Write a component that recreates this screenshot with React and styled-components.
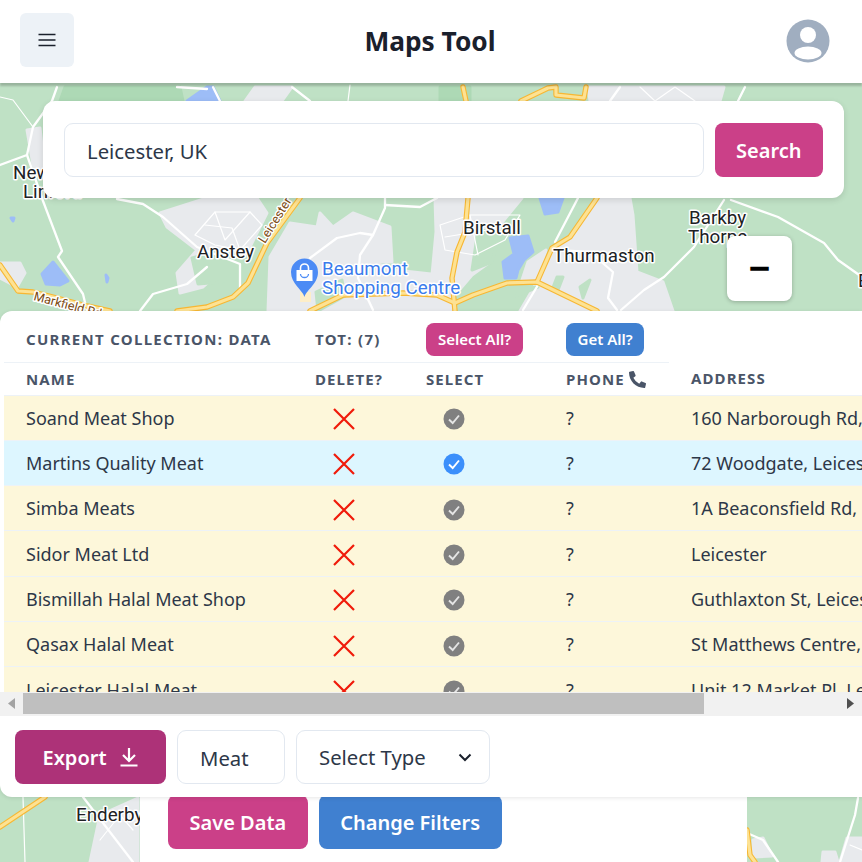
import React from 'react';
import styled, { createGlobalStyle } from 'styled-components';
import { FaPhoneAlt } from 'react-icons/fa';

const GlobalStyle = createGlobalStyle`
  html, body {
    margin: 0;
    padding: 0;
    height: 100%;
    overflow: hidden;
    background: #fff;
  }
  * {
    box-sizing: border-box;
  }
  body, input, button {
    font-family: "Noto Sans", "Open Sans", sans-serif;
  }
`;

const Page = styled.div`
  display: flex;
  flex-direction: column;
  height: 100vh;
  overflow: hidden;
`;

const Header = styled.header`
  position: relative;
  z-index: 5;
  flex: none;
  height: 83px;
  padding: 13px 32px 0 20px;
  display: flex;
  align-items: flex-start;
  justify-content: space-between;
  background: #fff;
  box-shadow: 0 3px 2px rgba(0, 0, 0, 0.2);
`;

const MenuButton = styled.button`
  width: 54px;
  height: 54px;
  padding: 0;
  display: flex;
  align-items: center;
  justify-content: center;
  background: #edf2f7;
  border: 0;
  border-radius: 6px;
`;

const Title = styled.h1`
  margin: 10px 0 0;
  font-size: 26.3px;
  line-height: 36px;
  font-weight: 700;
  color: #1a202c;
`;

const Avatar = styled.svg`
  width: 44px;
  height: 44px;
  margin-top: 6px;
`;

const MapArea = styled.main`
  position: relative;
  flex: 1;
  min-height: 0;
`;

const MapCanvas = styled.svg`
  position: absolute;
  inset: 0;
  width: 100%;
  height: 100%;
`;

const SearchCard = styled.form`
  position: absolute;
  top: 18px;
  left: 43px;
  width: 801px;
  height: 97px;
  padding: 22px 21px;
  display: flex;
  gap: 11px;
  background: #fff;
  border-radius: 12px;
  box-shadow: 0 2px 6px rgba(0, 0, 0, 0.12);
`;

const TextInput = styled.input`
  flex: ${props => (props.$grow ? 1 : 'none')};
  width: ${props => (props.$grow ? 'auto' : '108px')};
  min-width: 0;
  height: 54px;
  padding: 1px 22px 0;
  font-size: 20.3px;
  color: #2d3748;
  background: #fff;
  border: 1px solid #e2e8f0;
  border-radius: 9px;
  outline: none;
`;

const ActionButton = styled.button`
  flex: none;
  height: ${props => props.$height || 54}px;
  padding: 0 ${props => props.$pad || 21.5}px;
  display: flex;
  align-items: center;
  justify-content: center;
  gap: 12px;
  font-size: ${props => props.$size || 20}px;
  font-weight: 600;
  color: #fff;
  background: ${props => props.$color};
  border: 0;
  border-radius: ${props => props.$radius || 8}px;
`;

const ZoomButton = styled.button`
  position: absolute;
  top: 153px;
  left: 727px;
  width: 65px;
  height: 65px;
  padding: 0 0 3px;
  font-size: 38px;
  line-height: 1;
  font-weight: 700;
  color: #000;
  background: #fff;
  border: 0;
  border-radius: 8px;
  box-shadow: 0 1px 4px rgba(0, 0, 0, 0.25);
`;

const SaveSheet = styled.div`
  position: absolute;
  left: 140px;
  bottom: 0;
  width: 607px;
  height: 90px;
  padding: 0 0 13px 28px;
  display: flex;
  align-items: flex-end;
  gap: 11px;
  background: #fff;
`;

const Panel = styled.section`
  position: absolute;
  top: 228px;
  left: 0;
  right: 0;
  height: 486px;
  display: flex;
  flex-direction: column;
  background: #fff;
  border-radius: 12px 0 0 12px;
  overflow: hidden;
  box-shadow: 0 1px 4px rgba(0, 0, 0, 0.1);
`;

const TableScroll = styled.div`
  flex: none;
  height: 381px;
  padding-left: 4px;
  overflow: hidden;
`;

const Table = styled.table`
  width: 1300px;
  table-layout: fixed;
  border-collapse: collapse;
`;

const SummaryCell = styled.th`
  height: 51px;
  padding: 6px 0 0 22px;
  text-align: left;
  font-size: 15px;
  font-weight: 700;
  letter-spacing: 1.3px;
  white-space: nowrap;
  color: #4a5568;
  border-bottom: 1px solid #edf2f7;
`;

const HeadCell = styled.th`
  height: 33px;
  padding: 0 0 0 22px;
  text-align: left;
  font-size: 15px;
  font-weight: 700;
  letter-spacing: 1.1px;
  white-space: nowrap;
  color: #4a5568;
  border-bottom: 1px solid #edf2f7;

  svg {
    margin-left: 4px;
    vertical-align: -3px;
  }
`;

const Row = styled.tr`
  background: ${props => (props.$selected ? '#ddf6ff' : '#fdf7da')};
`;

const Cell = styled.td`
  height: 45.33px;
  padding: 0 0 0 22px;
  font-size: 18px;
  white-space: nowrap;
  overflow: hidden;
  color: #2d3748;
  border-bottom: 1px solid #edf2f7;
`;

const IconCell = styled(Cell)`
  padding-left: ${props => props.$left}px;
  padding-top: 3px;

  svg {
    display: block;
  }
`;

const ScrollBar = styled.div`
  flex: none;
  height: 24px;
  padding: 1px 0 2px;
  display: flex;
  align-items: stretch;
  background: #f1f1f1;
`;

const ScrollArrow = styled.div`
  flex: none;
  width: 23px;
  display: flex;
  align-items: center;
  justify-content: center;
`;

const ScrollThumb = styled.div`
  flex: none;
  width: 681px;
  background: #bfbfbf;
`;

const ScrollTrack = styled.div`
  flex: 1;
`;

const Footer = styled.div`
  flex: 1;
  padding: 14px 15px 0;
  display: flex;
  align-items: flex-start;
  gap: 11px;
`;

const TypeSelect = styled.div`
  width: 194px;
  height: 54px;
  padding: 0 17px 0 22px;
  display: flex;
  align-items: center;
  justify-content: space-between;
  font-size: 20.3px;
  color: #2d3748;
  background: #fff;
  border: 1px solid #e2e8f0;
  border-radius: 9px;
`;

const MapLabel = styled.text`
  font-family: Roboto, "Noto Sans", sans-serif;
  font-size: ${props => props.$size || 18.8}px;
  font-weight: ${props => props.$weight || 400};
  fill: ${props => props.$color || '#202124'};
  stroke: #fff;
  stroke-width: 3px;
  stroke-linejoin: round;
  paint-order: stroke;
`;

const greens = [
  '65,87 180,87 183,101 60,101',
  '440,87 470,87 470,101 440,101',
];

const greys = [
  '160,213 207,198 257,198 267,213 247,253 230,263 203,287 180,293 177,273 197,250 167,227',
  '27,130 40,128 46,182 33,165',
  '0,263 20,263 25,273 17,287 0,278',
  '268,311 270,257 290,223 317,227 320,213 333,227 353,213 390,227 392,262 372,262 356,311',
  '356,311 372,262 395,270 440,275 455,300 452,311',
  '435,198 522,198 500,225 490,262 472,275 455,295 432,275 436,232',
  '597,198 630,198 633,215 637,272 663,282 673,311 520,311 537,282 552,248 570,237',
  '528,262 546,250 537,282 522,280',
  '255,87 292,87 282,101 245,101',
  '588,87 724,87 720,101 590,101',
  '100,815 138,798 138,862 90,862',
  '753,840 763,838 772,856 753,857',
  '847,838 862,838 862,862 840,862',
  '823,852 835,852 838,862 822,862',
];

const darkGreens = [
  '192,258 215,252 240,255 248,262 222,282 198,284',
  '478,230 500,232 492,262 472,270',
  '557,277 563,277 558,290 552,290',
  '580,287 590,280 583,298',
  '538,287 520,288 516,296',
  '316,292 342,280 345,296 318,311',
];

const blues = [
  '187,101 207,87 213,87 220,101',
  '42,274 53,262 68,281 60,285 46,284',
  '510,238 528,236 533,252 524,260 518,270 516,278 505,278 503,262 514,254',
  '540,198 563,198 558,212 545,214',
  '106,275 108,278 107,282',
  '11,218 14,218 13,221',
];

const yellowRoads = [
  '0,265 18,291 33,292 53,297 87,306 110,311',
  '300,198 267,243 248,283 233,297 207,307 177,311',
  '310,311 343,295 403,293 437,295 455,303 473,295 507,283 537,282 597,311',
  '537,282 552,248 570,237 597,198',
  '455,311 452,278 457,252 465,232 468,198',
  '463,87 466,101',
  '521,101 548,88 556,87 556,95 584,98 586,87',
  '0,827 45,797',
  '747,830 750,855 755,862',
];

const whiteRoads = [
  '57,87 52,101 33,127 27,155 43,201 62,251 58,257 83,294 87,311',
  '27,155 0,165',
  '117,199 143,204 163,217 197,247 240,264 240,291',
  '140,311 153,294 187,284 207,267',
  '177,87 207,89',
  '213,87 220,101',
  '310,258 337,238 360,233 373,235 385,208 385,198',
  '373,235 360,255 358,278 373,310',
  '385,205 420,207 437,198',
  '553,250 590,252 613,272 608,298 617,310',
  '578,198 555,242',
  '523,310 538,285',
  '724,200 694,247 664,277 644,290 621,310',
  '731,200 778,217 824,243 838,260 862,277',
  '83,797 133,862',
  '858,798 855,815 840,862',
  '747,833 763,840 778,862',
  '745,87 738,101',
  '292,87 310,101',
  '620,87 610,101',
];

const thinRoads = [
  '0,97 13,100 33,127',
  '23,797 25,862',
  '195,235 215,212 250,212 262,225 240,250 215,245 195,235',
  '215,212 225,240 250,212',
  '205,225 232,228 240,250',
  '440,225 470,215 520,215 505,240 475,255 445,250 440,225',
  '470,215 478,255',
  '445,237 500,228',
  '100,840 120,815 133,830',
  '850,845 862,850',
  '640,87 655,101 675,87 695,101',
  '350,85 348,101',
];

const LineSet = ({ lines, color, width }) => lines.map(points => (
  <polyline
    key={points}
    points={points}
    fill="none"
    stroke={color}
    strokeWidth={width}
    strokeLinejoin="round"
    strokeLinecap="round"
  />
));

const AreaSet = ({ areas, color }) => areas.map(points => (
  <polygon key={points} points={points} fill={color} stroke={color} strokeWidth="3" strokeLinejoin="round" />
));

const MapDrawing = () => (
  <MapCanvas viewBox="0 83 862 779" preserveAspectRatio="none">
    <rect x="0" y="83" width="862" height="779" fill="#bfe1c5" />
    <AreaSet areas={greens} color="#add9b5" />
    <AreaSet areas={greys} color="#e8eaed" />
    <AreaSet areas={darkGreens} color="#bfe1c5" />
    <AreaSet areas={blues} color="#9dbdf7" />
    <LineSet lines={thinRoads} color="#fff" width={1.2} />
    <LineSet lines={whiteRoads} color="#fff" width={2.3} />
    <LineSet lines={yellowRoads} color="#f7b733" width={5.4} />
    <LineSet lines={yellowRoads} color="#fde293" width={3.2} />
    <rect x="300" y="292" width="11" height="10" fill="#fdeec8" />
    <path
      d="M304.5 297 C302 289 291 284 291 272 a13.5 13.5 0 0 1 27 0 C318 284 307 289 304.5 297 Z"
      fill="#4c8bf5"
    />
    <path d="M296.5 270 h16 v11 h-16 Z" fill="#fff" />
    <path d="M300.5 270 v-2 a4 4 0 0 1 8 0 v2" fill="none" stroke="#fff" strokeWidth="1.6" />
    <path d="M300.5 274 a4 3.5 0 0 0 8 0" fill="none" stroke="#4c8bf5" strokeWidth="1.3" />
    <MapLabel x="13" y="179">Newtown</MapLabel>
    <MapLabel x="23" y="198">Linford</MapLabel>
    <MapLabel x="197" y="258">Anstey</MapLabel>
    <MapLabel x="463" y="234">Birstall</MapLabel>
    <MapLabel x="553" y="262">Thurmaston</MapLabel>
    <MapLabel x="689" y="224">Barkby</MapLabel>
    <MapLabel x="688" y="243">Thorpe</MapLabel>
    <MapLabel x="858" y="287">E</MapLabel>
    <MapLabel x="76" y="821">Enderby</MapLabel>
    <MapLabel x="322" y="275" $color="#3a7cec">Beaumont</MapLabel>
    <MapLabel x="322" y="294" $color="#3a7cec">Shopping Centre</MapLabel>
    <MapLabel x="265" y="244" $size={12.5} $color="#7b4a12" transform="rotate(-58 265 244)">Leicester</MapLabel>
    <MapLabel x="33" y="300" $size={12.5} $color="#7b4a12" transform="rotate(15 33 300)">Markfield Rd</MapLabel>
  </MapCanvas>
);

const RemoveIcon = () => (
  <svg width="24" height="24" viewBox="0 0 24 24">
    <path d="M2 2 L22 22 M22 2 L2 22" stroke="#f01a0a" strokeWidth="2.2" fill="none" />
  </svg>
);

const CheckIcon = ({ selected }) => (
  <svg width="22" height="22" viewBox="0 0 22 22">
    <circle cx="11" cy="11" r="10.5" fill={selected ? '#3b8ffb' : '#808080'} />
    <path d="M6 11.5 L9.7 15 L16 7.5" stroke={selected ? '#fff' : '#e4e4e4'} strokeWidth="1.9" fill="none" />
  </svg>
);

const places = [
  { name: 'Soand Meat Shop', address: '160 Narborough Rd, Leicester LE3 0PE, UK' },
  { name: 'Martins Quality Meat', address: '72 Woodgate, Leicester LE3 5GE, UK', selected: true },
  { name: 'Simba Meats', address: '1A Beaconsfield Rd, Leicester LE3 0FF, UK' },
  { name: 'Sidor Meat Ltd', address: 'Leicester' },
  { name: 'Bismillah Halal Meat Shop', address: 'Guthlaxton St, Leicester LE2 0SH, UK' },
  { name: 'Qasax Halal Meat', address: 'St Matthews Centre, Leicester LE1 2NQ, UK' },
  { name: 'Leicester Halal Meat', address: 'Unit 12 Market Pl, Leicester LE1 5GG, UK' },
];

export default function App() {
  return (
    <Page>
      <GlobalStyle />
      <Header>
        <MenuButton aria-label="Menu">
          <svg width="18" height="14" viewBox="0 0 18 14">
            <path d="M0.5 1.5 H17.5 M0.5 7 H17.5 M0.5 12.5 H17.5" stroke="#1a202c" strokeWidth="1.7" fill="none" />
          </svg>
        </MenuButton>
        <Title>Maps Tool</Title>
        <Avatar viewBox="0 0 44 44">
          <circle cx="22" cy="22" r="21.5" fill="#a0aec0" />
          <circle cx="22" cy="16" r="8" fill="#fff" />
          <ellipse cx="22" cy="34" rx="13.5" ry="6.5" fill="#fff" />
        </Avatar>
      </Header>
      <MapArea>
        <MapDrawing />
        <SearchCard>
          <TextInput $grow defaultValue="Leicester, UK" />
          <ActionButton type="button" $color="#cb4088">Search</ActionButton>
        </SearchCard>
        <ZoomButton aria-label="Zoom out">−</ZoomButton>
        <SaveSheet>
          <ActionButton $color="#cb4088">Save Data</ActionButton>
          <ActionButton $color="#4080d0">Change Filters</ActionButton>
        </SaveSheet>
        <Panel>
          <TableScroll>
            <Table>
              <colgroup>
                <col width="289" />
                <col width="111" />
                <col width="140" />
                <col width="125" />
                <col />
              </colgroup>
              <thead>
                <tr>
                  <SummaryCell>CURRENT COLLECTION: DATA</SummaryCell>
                  <SummaryCell>TOT: (7)</SummaryCell>
                  <SummaryCell>
                    <ActionButton $color="#cb4088" $height={33} $size={15} $pad={12}>Select All?</ActionButton>
                  </SummaryCell>
                  <SummaryCell>
                    <ActionButton $color="#4080d0" $height={33} $size={15} $pad={11.5}>Get All?</ActionButton>
                  </SummaryCell>
                </tr>
                <tr>
                  <HeadCell>NAME</HeadCell>
                  <HeadCell>DELETE?</HeadCell>
                  <HeadCell>SELECT</HeadCell>
                  <HeadCell>PHONE<FaPhoneAlt size={17} /></HeadCell>
                  <HeadCell>ADDRESS</HeadCell>
                </tr>
              </thead>
              <tbody>
                {places.map(place => (
                  <Row key={place.name} $selected={place.selected}>
                    <Cell>{place.name}</Cell>
                    <IconCell $left={39}><RemoveIcon /></IconCell>
                    <IconCell $left={39}><CheckIcon selected={place.selected} /></IconCell>
                    <Cell>?</Cell>
                    <Cell>{place.address}</Cell>
                  </Row>
                ))}
              </tbody>
            </Table>
          </TableScroll>
          <ScrollBar>
            <ScrollArrow>
              <svg width="7" height="11" viewBox="0 0 7 11"><path d="M7 0 V11 L0 5.5 Z" fill="#a3a3a3" /></svg>
            </ScrollArrow>
            <ScrollThumb />
            <ScrollTrack />
            <ScrollArrow>
              <svg width="7" height="11" viewBox="0 0 7 11"><path d="M0 0 V11 L7 5.5 Z" fill="#505050" /></svg>
            </ScrollArrow>
          </ScrollBar>
          <Footer>
            <ActionButton $color="#ad3278" $pad={27.5}>
              Export
              <svg width="20" height="20" viewBox="0 0 20 20">
                <path d="M10 1 V13 M4 8 L10 14 L16 8 M1.5 18.5 H18.5" stroke="#fff" strokeWidth="2.2" fill="none" />
              </svg>
            </ActionButton>
            <TextInput defaultValue="Meat" />
            <TypeSelect>
              Select Type
              <svg width="14" height="9" viewBox="0 0 14 9">
                <path d="M1.5 1.5 L7 7 L12.5 1.5" stroke="#1a202c" strokeWidth="2" fill="none" />
              </svg>
            </TypeSelect>
          </Footer>
        </Panel>
      </MapArea>
    </Page>
  );
}
